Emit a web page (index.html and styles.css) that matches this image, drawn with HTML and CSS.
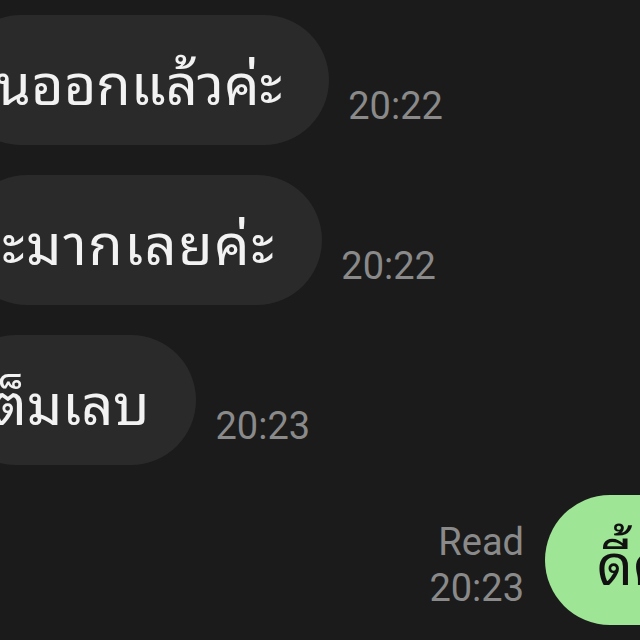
FILE: index.html
```html
<!DOCTYPE html>
<html lang="th">

<head>
    <meta charset="utf-8">
    <meta name="viewport" content="width=device-width, initial-scale=1.0">
    <title>Chat</title>
    <link rel="stylesheet" href="styles.css">
</head>

<body>

    <section class="chat">

        <div class="row in">
            <p class="bubble">นออกแล้วค่ะ</p>
            <p class="meta">20:22</p>
        </div>

        <div class="row in">
            <p class="bubble more">ะมากเลยค่ะ</p>
            <p class="meta">20:22</p>
        </div>

        <div class="row in">
            <p class="bubble less">ต็มเลบ</p>
            <p class="meta">20:23</p>
        </div>

        <div class="row out">
            <p class="meta">Read<br>20:23</p>
            <p class="bubble">ดี้ค่ะ</p>
        </div>

    </section>

</body>

</html>
```

FILE: styles.css
```css
body {
    margin: 0;
    background-color: #1b1b1b;
    overflow: hidden;
}

.chat {
    display: flex;
    flex-direction: column;
    gap: 30px;
    padding-top: 15px;
}

.row {
    display: flex;
    align-items: flex-end;
    gap: 19px;
}

.row p {
    margin: 0;
}

.bubble {
    height: 130px;
    border-radius: 65px;
    display: flex;
    align-items: center;
    white-space: nowrap;
    font-family: "Noto Sans Thai Looped", "Noto Serif Thai", "Loma", "Garuda", "Noto Sans Thai", sans-serif;
    font-size: 56px;
    flex-shrink: 0;
}

.in .bubble {
    background-color: #2a2a2a;
    color: #f2f2f2;
    padding: 0 47px 0 40px;
    margin-left: -44px;
}

.in .more {
    margin-left: -38px;
    letter-spacing: 1.5px;
}

.in .less {
    margin-left: -49px;
}

.meta {
    font-family: Roboto, sans-serif;
    font-size: 38px;
    line-height: 46px;
    color: #8a8a8a;
    padding-bottom: 16px;
}

.out {
    justify-content: flex-end;
    gap: 21px;
    margin-right: -91px;
}

.out .meta {
    text-align: right;
    padding-bottom: 14px;
}

.out .bubble {
    background-color: #9ee596;
    color: #111;
    padding: 0 40px 0 52px;
}
```
